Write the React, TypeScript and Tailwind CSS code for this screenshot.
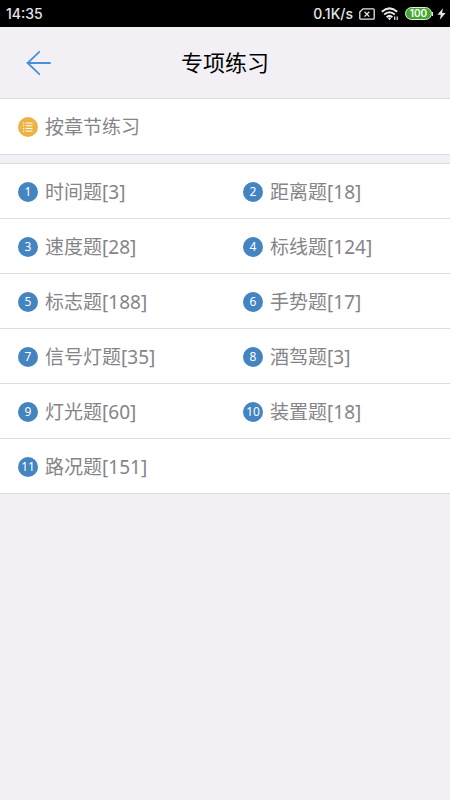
interface Topic {
  id: number
  name: string
  count: number
}

const topics: Topic[] = [
  { id: 1, name: "时间题", count: 3 },
  { id: 2, name: "距离题", count: 18 },
  { id: 3, name: "速度题", count: 28 },
  { id: 4, name: "标线题", count: 124 },
  { id: 5, name: "标志题", count: 188 },
  { id: 6, name: "手势题", count: 17 },
  { id: 7, name: "信号灯题", count: 35 },
  { id: 8, name: "酒驾题", count: 3 },
  { id: 9, name: "灯光题", count: 60 },
  { id: 10, name: "装置题", count: 18 },
  { id: 11, name: "路况题", count: 151 },
]

function StatusBar() {
  return (
    <div className="flex h-[27px] items-center justify-between bg-black pl-1.5 pr-1 font-['Inter',sans-serif] text-sm font-medium text-gray-200">
      <span>14:35</span>
      <div className="flex items-center gap-1.5">
        <span>0.1K/s</span>
        <svg width="16" height="12" viewBox="0 0 16 12" fill="none" stroke="currentColor" strokeWidth="1.3">
          <path d="M4 0.8H14.2Q15.2 0.8 15.2 1.8V10.2Q15.2 11.2 14.2 11.2H1.8Q0.8 11.2 0.8 10.2V4Z" />
          <path d="M5.5 3.8L10.3 8.6M10.3 3.8L5.5 8.6" />
        </svg>
        <svg width="18" height="14" viewBox="0 0 18 14" fill="none" stroke="currentColor" strokeWidth="2">
          <path d="M0.8 4.8Q8.5 -2 16.2 4.8" />
          <path d="M3.2 7.6Q8.5 2.8 13.8 7.6" />
          <path d="M5.6 10.2Q8.5 7.6 11.4 10.2" />
          <path d="M6.8 11.3L8.5 10.2L10.2 11.3L8.5 13.2Z" fill="currentColor" stroke="none" />
          <path d="M13.7 9.5V13M16.2 9.5V13" strokeWidth="1.2" />
        </svg>
        <span className="flex items-center">
          <span className="flex h-[13px] w-[27px] items-center justify-center rounded-full border border-gray-200 bg-[#43a82e] text-[10px] font-semibold text-white">
            100
          </span>
          <span className="h-1 w-px bg-gray-200" />
          <svg className="ml-1" width="9" height="12" viewBox="0 0 9 12" fill="currentColor">
            <path d="M6 0.2L0.4 6.8H3.8L2.8 11.8L8.6 4.9H5.1Z" />
          </svg>
        </span>
      </div>
    </div>
  )
}

function Header() {
  return (
    <header className="grid h-[71px] grid-cols-[1fr_auto_1fr] items-center px-6">
      <button type="button" aria-label="返回" className="justify-self-start text-[#4a90d9]">
        <svg width="28" height="26" viewBox="0 0 28 26" fill="none" stroke="currentColor" strokeWidth="1.8" strokeLinecap="round">
          <path d="M15.3 1.8L3.6 13L15.3 24.2" />
          <path d="M3.6 13H26" />
        </svg>
      </button>
      <h1 className="text-[22px] font-normal text-black">专项练习</h1>
    </header>
  )
}

function ChapterLink() {
  return (
    <a href="#chapters" className="flex h-[57px] items-center gap-[7px] border-y border-[#dddbdf] bg-white pl-[18px]">
      <svg width="20" height="20" viewBox="0 0 20 20" fill="none" stroke="white">
        <circle cx="10" cy="10" r="10" fill="#ecb244" stroke="none" />
        <path d="M7.5 6H14.5M7.5 8.7H14.5M7.5 11.4H14.5M7.5 14.1H14.5" />
        <path d="M4.8 6H6.2M4.8 8.7H6.2M4.8 11.4H6.2M4.8 14.1H6.2" />
      </svg>
      <span className="pt-0.5">按章节练习</span>
    </a>
  )
}

function TopicItem({ topic }: { topic: Topic }) {
  return (
    <li className="border-b border-[#dddbdf] last:col-span-2">
      <a href={`#topic-${topic.id}`} className="flex h-[54px] items-center gap-[7px] pl-[18px] pt-px">
        <span className="flex size-5 items-center justify-center rounded-full bg-[#4484c0] text-xs text-white">
          {topic.id}
        </span>
        <span className="pt-0.5">
          {topic.name}[{topic.count}]
        </span>
      </a>
    </li>
  )
}

function App() {
  return (
    <div className="min-h-screen bg-[#f2f0f4] font-['Noto_Sans','Noto_Sans_CJK_SC',sans-serif]" lang="zh-CN">
      <StatusBar />
      <Header />
      <main className="text-[19px] text-[#868489]">
        <ChapterLink />
        <ul className="mt-2 grid grid-cols-2 border-t border-[#dddbdf] bg-white">
          {topics.map((topic) => (
            <TopicItem key={topic.id} topic={topic} />
          ))}
        </ul>
      </main>
    </div>
  )
}

export default App
